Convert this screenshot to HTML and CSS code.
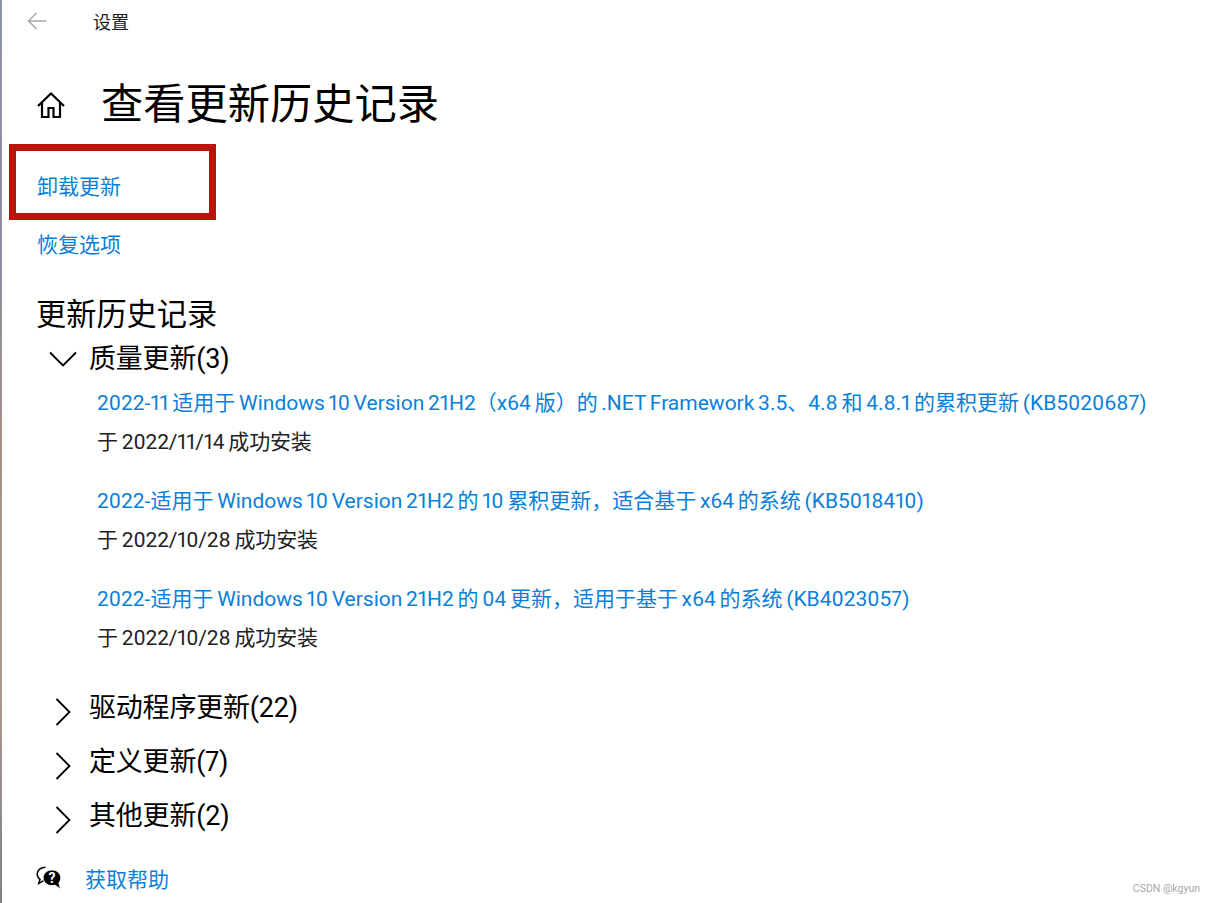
FILE: index.html
```html
<!DOCTYPE html>
<html lang="zh-CN">
<head>
  <meta charset="UTF-8" />
  <meta name="viewport" content="width=device-width, initial-scale=1.0" />
  <title>设置</title>
  <link rel="stylesheet" href="styles.css">
</head>
<body>
  <div class="edge"></div>
  <div class="window">
    <div class="titlebar">
      <svg class="back" width="20" height="18" viewBox="0 0 20 18"><path d="M9.500 1 1.500 9l8 8M1.500 9H19.500" fill="none" stroke="#a6a6a6" stroke-width="1.400"/></svg>
      <span>设置</span>
    </div>

    <div class="page-head">
      <svg class="home" width="30" height="28" viewBox="0 0 30 28"><path d="M2 15 15 2.500 28 15M6 11.500V26h6.500v-9h5v9H24V11.500" fill="none" stroke="#000" stroke-width="2.200"/></svg>
      <h1>查看更新历史记录</h1>
    </div>

    <div class="marked">
      <a href="#">卸载更新</a>
    </div>
    <a class="restore" href="#">恢复选项</a>

    <h2>更新历史记录</h2>

    <div class="group">
      <svg class="chevron" width="28" height="16" viewBox="0 0 28 16"><path d="M1 1.500 14 14.500 27 1.500" fill="none" stroke="#000" stroke-width="1.800"/></svg>
      <span>质量更新(3)</span>
    </div>
    <div class="updates">
      <div class="update">
        <a href="#">2022-11 适用于 Windows 10 Version 21H2（x64 版）的 .NET Framework 3.5、4.8 和 4.8.1 的累积更新 (KB5020687)</a>
        <p>于 2022/11/14 成功安装</p>
      </div>
      <div class="update">
        <a href="#">2022-适用于 Windows 10 Version 21H2 的 10 累积更新，适合基于 x64 的系统 (KB5018410)</a>
        <p>于 2022/10/28 成功安装</p>
      </div>
      <div class="update">
        <a href="#">2022-适用于 Windows 10 Version 21H2 的 04 更新，适用于基于 x64 的系统 (KB4023057)</a>
        <p>于 2022/10/28 成功安装</p>
      </div>
    </div>

    <div class="group closed">
      <svg class="chevron-right" width="16" height="28" viewBox="0 0 16 28"><path d="M1.500 1 14.500 14 1.500 27" fill="none" stroke="#000" stroke-width="1.800"/></svg>
      <span>驱动程序更新(22)</span>
    </div>
    <div class="group closed">
      <svg class="chevron-right" width="16" height="28" viewBox="0 0 16 28"><path d="M1.500 1 14.500 14 1.500 27" fill="none" stroke="#000" stroke-width="1.800"/></svg>
      <span>定义更新(7)</span>
    </div>
    <div class="group closed">
      <svg class="chevron-right" width="16" height="28" viewBox="0 0 16 28"><path d="M1.500 1 14.500 14 1.500 27" fill="none" stroke="#000" stroke-width="1.800"/></svg>
      <span>其他更新(2)</span>
    </div>

    <div class="help">
      <svg width="26" height="25" viewBox="0 0 26 25">
        <path d="M9.500 1.200C5 1.200 1.200 4 1.200 8c0 2.200 1 4 2.800 5.200L2.700 17.500l5-2.800" fill="#fff" stroke="#000" stroke-width="1.500"/>
        <path d="M16 4c-4.900 0-8.800 3.500-8.800 7.800s3.900 7.800 8.800 7.800c1.100 0 2.100-.2 3-.5l5.500 4-1.700-6.200c1.200-1.300 1.900-3.100 1.900-5.100C24.700 7.500 20.800 4 16 4z" fill="#000" stroke="#fff" stroke-width=".8"/>
        <text class="help-mark" x="16" y="17" text-anchor="middle">?</text>
      </svg>
      <a href="#">获取帮助</a>
    </div>
  </div>
  <div class="watermark">CSDN @kgyun</div>
</body>
</html>
```

FILE: styles.css
```css
html, body {
  height: 100%;
}
body {
  margin: 0;
  background: #fff;
  color: #000;
  font-family: Roboto, "Noto Sans CJK SC", sans-serif;
  font-variant-numeric: proportional-nums;
  display: flex;
  position: relative;
  overflow: hidden;
}
a {
  color: #0a7fd9;
  text-decoration: none;
}
.edge {
  width: 2px;
  flex-shrink: 0;
  background: linear-gradient(#8d93a8 0, #8d8f9f 30%, #a58f86 50%, #b09a90 75%, #7f8088 100%);
}
.window {
  flex-grow: 1;
  padding-left: 34px;
}
.titlebar {
  display: flex;
  align-items: center;
  height: 42px;
  font-size: 18px;
  color: #222;
}
.back {
  margin-left: -9px;
  margin-right: 46px;
}
.page-head {
  display: flex;
  align-items: center;
  height: 102px;
  padding-top: 24px;
  box-sizing: border-box;
}
.home {
  margin-right: 35px;
}
h1 {
  margin: 0;
  font-size: 42.250px;
  font-weight: 400;
  line-height: 60px;
}
.marked {
  margin-left: -27px;
  width: 207px;
  height: 76px;
  box-sizing: border-box;
  border: 7px solid #b9140a;
  padding-left: 21px;
  padding-top: 6px;
  display: flex;
  align-items: center;
  font-size: 21px;
}
.restore {
  display: block;
  margin-top: 8px;
  padding-left: 1px;
  font-size: 21px;
  line-height: 34px;
}
h2 {
  margin: 32px 0 0;
  font-size: 30.200px;
  font-weight: 400;
  line-height: 42px;
}
.group {
  display: flex;
  align-items: center;
  font-size: 27px;
  letter-spacing: -0.200px;
  line-height: 40px;
  margin-top: 3px;
}
.chevron {
  margin-left: 13px;
  margin-right: 12px;
}
.chevron-right {
  margin-left: 19px;
  margin-right: 18px;
  margin-top: 8px;
}
.closed {
  height: 54px;
  margin: 0;
}
.updates {
  padding-left: 61px;
  padding-bottom: 8px;
  font-size: 21px;
  word-spacing: -1.500px;
}
.update {
  height: 98px;
  padding-top: 9px;
  box-sizing: border-box;
  line-height: 30px;
}
.update p {
  margin: 9px 0 0;
  color: #222;
  word-spacing: -1px;
  letter-spacing: -0.170px;
}
.help {
  display: flex;
  align-items: center;
  margin-top: 20px;
  font-size: 21px;
}
.help a {
  margin-left: 23px;
}
.help-mark {
  font-size: 14px;
  font-weight: 700;
  fill: #fff;
}
.watermark {
  position: absolute;
  right: 16px;
  bottom: 8px;
  font-size: 10.500px;
  color: #a8a8a8;
}
```
